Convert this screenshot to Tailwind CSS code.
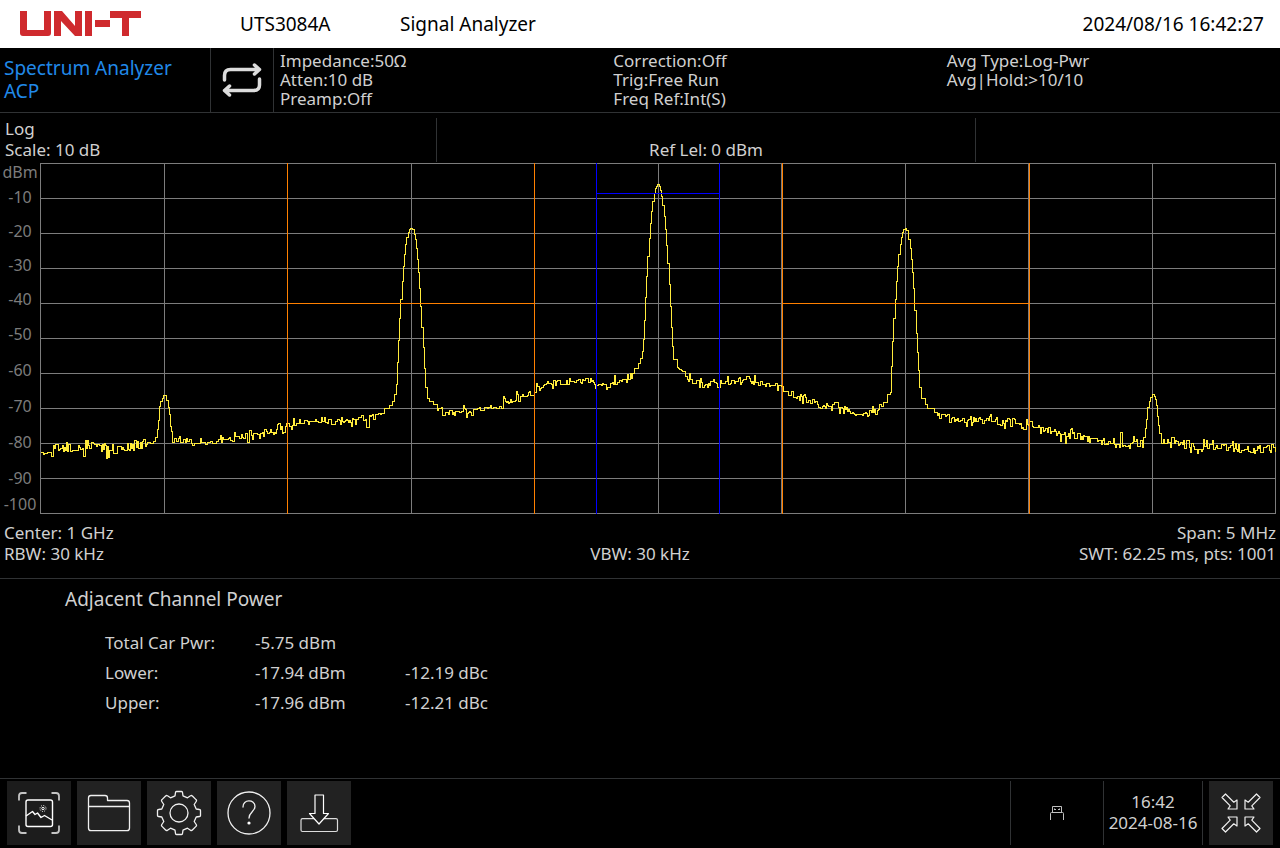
<!DOCTYPE html>
<html lang="en">
<head>
<meta charset="utf-8">
<meta name="viewport" content="width=device-width, initial-scale=1">
<title>UTS3084A Signal Analyzer</title>
<script src="https://cdn.jsdelivr.net/npm/@tailwindcss/browser@4"></script>
</head>
<body class="flex min-h-screen flex-col bg-black font-['Noto_Sans',sans-serif] text-[17px] leading-[21px] text-[#d0d0d0]">

<header class="flex h-12 items-center bg-white pr-4 pl-5 text-[19px] text-black">
  <div class="w-[220px]">
    <svg class="block" width="121" height="26" viewBox="0 0 121 26" fill="#cf2a2e" role="img" aria-label="UNI-T">
      <path d="M0 0h7v19h17V0h7v22q0 3-3 3H3q-3 0-3-3z"/>
      <path d="M34 0h8l13 15V0h7v25h-7L41 10v15h-7z"/>
      <path d="M65 0h7v25h-7z"/>
      <path d="M75 9h15v7H75z"/>
      <path d="M90 0h31v7h-12v18h-7V7H90z"/>
    </svg>
  </div>
  <span class="w-40">UTS3084A</span>
  <h1 class="flex-1">Signal Analyzer</h1>
  <time datetime="2024-08-16T16:42:27">2024/08/16 16:42:27</time>
</header>

<section class="flex h-[65px] border-b border-[#303234]" aria-label="Measurement settings">
  <button class="w-[211px] border-r border-[#303234] pl-1 text-left text-[19px] leading-[23px] text-[#2089e8]">Spectrum Analyzer<br>ACP</button>
  <button class="flex w-[63px] items-center justify-center border-r border-[#303234]" aria-label="Continuous sweep">
    <svg width="40" height="34" viewBox="0 0 40 34" fill="none" stroke="#dcdcdc" stroke-width="3.500" stroke-linecap="round" stroke-linejoin="round">
      <path d="M2.500 17V12.500Q2.500 6.500 8.500 6.500H37M32.500 2L37.500 6.500L32.500 11"/>
      <path d="M37.500 16V22Q37.500 27.500 31.500 27.500H3M7.500 23L2.500 27.500L7.500 32"/>
    </svg>
  </button>
  <div class="grid flex-1 grid-cols-3 pt-[3px] pl-1.5 leading-[19px] whitespace-nowrap">
    <div><p>Impedance:50Ω</p><p>Atten:10 dB</p><p>Preamp:Off</p></div>
    <div><p>Correction:Off</p><p>Trig:Free Run</p><p>Freq Ref:Int(S)</p></div>
    <div><p>Avg Type:Log-Pwr</p><p>Avg|Hold:&gt;10/10</p></div>
  </div>
</section>

<main class="flex flex-1 flex-col">
  <div class="flex pt-[5px]">
    <div class="h-11 w-[437px] border-r border-[#303234] pl-[5px]"><p>Log</p><p>Scale: 10 dB</p></div>
    <div class="flex h-11 w-[539px] items-end justify-center border-r border-[#303234] pb-0.5"><p>Ref Lel: 0 dBm</p></div>
  </div>

  <div class="mt-px flex pr-1">
    <div class="flex w-10 flex-col text-center text-[16px] text-[#7c7c7c]">
      <span class="h-[17px] leading-[18px]">dBm</span>
      <span class="h-[34px] leading-[34px]">-10</span>
      <span class="h-[34px] leading-[34px]">-20</span>
      <span class="h-[34px] leading-[34px]">-30</span>
      <span class="h-[34px] leading-[34px]">-40</span>
      <span class="h-9 leading-9">-50</span>
      <span class="h-9 leading-9">-60</span>
      <span class="h-9 leading-9">-70</span>
      <span class="h-9 leading-9">-80</span>
      <span class="h-9 leading-9">-90</span>
      <span class="h-[18px] leading-4">-100</span>
    </div>
    <svg class="block h-[351px] min-w-0 flex-1" viewBox="0 0 1236 351" preserveAspectRatio="none" fill="none" shape-rendering="crispEdges" role="img" aria-label="Spectrum trace">
      <g stroke="#7c7c7c">
        <path d="M0 .5H1236M0 35.500H1236M0 70.500H1236M0 105.500H1236M0 140.500H1236M0 175.500H1236M0 210.500H1236M0 245.500H1236M0 280.500H1236M0 315.500H1236M0 350.500H1236"/>
        <path d="M.5 0V351M124.500 0V351M247.500 0V351M371.500 0V351M494.500 0V351M618.500 0V351M741.500 0V351M865.500 0V351M988.500 0V351M1112.500 0V351M1235.500 0V351"/>
      </g>
      <path id="trace" stroke="#ffeb3b"/>
      <path stroke="#ff8000" d="M247.500 0V351M494.500 0V351M742.500 0V351M989.500 0V351M247 140.500H495M742 140.500H990"/>
      <path stroke="#0000ff" d="M556.500 0V351M679.500 0V351M556 30.500H680"/>
    </svg>
  </div>

  <div class="grid grid-cols-3 pt-2 pr-1 pb-3.5 pl-1">
    <p>Center: 1 GHz</p><p class="col-start-3 text-right">Span: 5 MHz</p>
    <p>RBW: 30 kHz</p><p class="text-center">VBW: 30 kHz</p><p class="text-right whitespace-nowrap">SWT: 62.25 ms, pts: 1001</p>
  </div>

  <section class="flex-1 border-t border-[#303234] pt-2 pl-[65px]">
    <h2 class="text-[19px] leading-6">Adjacent Channel Power</h2>
    <table class="mt-4 ml-10 text-left">
      <tbody>
        <tr class="h-[30px]"><th class="w-[150px] p-0 font-normal">Total Car Pwr:</th><td class="w-[150px] p-0">-5.75 dBm</td><td></td></tr>
        <tr class="h-[30px]"><th class="p-0 font-normal">Lower:</th><td class="p-0">-17.94 dBm</td><td class="p-0">-12.19 dBc</td></tr>
        <tr class="h-[30px]"><th class="p-0 font-normal">Upper:</th><td class="p-0">-17.96 dBm</td><td class="p-0">-12.21 dBc</td></tr>
      </tbody>
    </table>
  </section>
</main>

<footer class="flex h-[70px] border-t border-[#303234] pt-0.5 pr-[7px] pb-[3px] pl-[7px]">
  <nav class="flex flex-1 gap-1.5" aria-label="Tools">
    <button class="size-16 bg-[#1c1c1c]" aria-label="Screenshot">
      <svg class="block" width="64" height="64" viewBox="0 0 64 64" fill="none" stroke="#fff" stroke-width="1.400" stroke-linejoin="round">
        <path stroke="#c4c4c4" stroke-width="1.800" d="M12 19.500V15Q12 12 15 12H19.500M44.500 12H49Q52 12 52 15V19.500M12 44.500V49Q12 52 15 52H19.500M44.500 52H49Q52 52 52 49V44.500"/>
        <rect x="19" y="19" width="26.500" height="26.500" rx="2"/>
        <path d="M19 35L25.500 30.500L28 33.500L30.500 32L34 36.500L37.500 34.500L45 39"/>
        <circle cx="36" cy="27.500" r="1.200" stroke-width="1"/>
        <circle cx="36" cy="27.500" r="3" stroke-width="1" stroke-dasharray="1 1.350"/>
      </svg>
    </button>
    <button class="size-16 bg-[#222]" aria-label="Files">
      <svg class="block" width="64" height="64" viewBox="0 0 64 64" fill="none" stroke="#f0f0f0" stroke-width="1.300" stroke-linejoin="round">
        <path d="M11.500 47V17Q11.500 14.500 14 14.500H28Q30.500 14.500 30.500 17V19.500H50Q52.500 19.500 52.500 22V47Q52.500 49.700 50 49.700H14Q11.500 49.700 11.500 47ZM11.500 25.500H52.500"/>
      </svg>
    </button>
    <button class="size-16 bg-[#222]" aria-label="Settings">
      <svg class="block" width="64" height="64" viewBox="-32 -32 64 64" fill="none" stroke="#f0f0f0" stroke-width="1.300" stroke-linejoin="round">
        <circle r="9"/>
        <path d="M-2.500 -21.500H2.500Q3.500 -21.500 3.500 -20.500L4 -17.200L8.500 -15.200L11.500 -17.200Q12.500 -18 13.400 -17L17 -13.400Q18 -12.500 17.200 -11.500L15.200 -8.500L17.200 -4L20.500 -3.500Q21.500 -3.500 21.500 -2.500V2.500Q21.500 3.500 20.500 3.500L17.200 4L15.200 8.500L17.200 11.500Q18 12.500 17 13.400L13.400 17Q12.500 18 11.500 17.200L8.500 15.200L4 17.200L3.500 20.500Q3.500 21.500 2.500 21.500H-2.500Q-3.500 21.500 -3.500 20.500L-4 17.200L-8.500 15.200L-11.500 17.200Q-12.500 18 -13.400 17L-17 13.400Q-18 12.500 -17.200 11.500L-15.200 8.500L-17.200 4L-20.500 3.500Q-21.500 3.500 -21.500 2.500V-2.500Q-21.500 -3.500 -20.500 -3.500L-17.200 -4L-15.200 -8.500L-17.200 -11.500Q-18 -12.500 -17 -13.400L-13.400 -17Q-12.500 -18 -11.500 -17.200L-8.500 -15.200L-4 -17.200L-3.500 -20.500Q-3.500 -21.500 -2.500 -21.500Z"/>
      </svg>
    </button>
    <button class="size-16 bg-[#222]" aria-label="Help">
      <svg class="block" width="64" height="64" viewBox="0 0 64 64" fill="none" stroke="#f0f0f0" stroke-width="1.300" stroke-linecap="round">
        <circle cx="32" cy="32" r="21"/>
        <path d="M26 26C25.700 18 38 18 38 25.500C38 30.500 32 31 32 37"/>
        <circle cx="32" cy="42" r="1.600" fill="#fff" stroke="none"/>
      </svg>
    </button>
    <button class="size-16 bg-[#222]" aria-label="Save">
      <svg class="block" width="64" height="64" viewBox="0 0 64 64" fill="none" stroke="#dcdcdc" stroke-width="1.200" stroke-linejoin="round">
        <path d="M27 37.700H15.500Q14 37.700 14 39.200V49Q14 50.500 15.500 50.500H49Q50.500 50.500 50.500 49V39.200Q50.500 37.700 49 37.700H37"/>
        <path stroke="#fff" d="M28 14H36.500V32.500H41.500L32 43L22.500 32.500H28Z"/>
      </svg>
    </button>
  </nav>

  <div class="flex w-[94px] items-center justify-center border-x border-[#303234]">
    <svg width="14" height="14" viewBox="0 0 14 14" fill="none" stroke="#c0c0c0" role="img" aria-label="USB drive connected">
      <path d="M.5 14V7.500Q.5 6.500 1.500 6.500H12.500Q13.500 6.500 13.500 7.500V14M2.500 6.500V.5H11.500V6.500M4.500 2.500V4M5 3.500H6M8 3.500H9M9.500 2.500V4"/>
    </svg>
  </div>
  <div class="flex w-[99px] flex-col justify-center border-r border-[#303234] pb-0.5 text-center whitespace-nowrap">
    <span>16:42</span><span>2024-08-16</span>
  </div>
  <button class="ml-1.5 size-16 bg-[#222]" aria-label="Shrink window">
    <svg class="block" width="64" height="64" viewBox="-32 -32 64 64" fill="none" stroke="#f0f0f0" stroke-width="1.200" stroke-linejoin="round">
      <path d="M-15.500 -19L-7.200 -10.800L-4 -13V-4H-13L-10.800 -7.200L-19 -15.500Z"/>
      <path d="M15.500 -19L7.200 -10.800L4 -13V-4H13L10.800 -7.200L19 -15.500Z"/>
      <path d="M-15.500 19L-7.200 10.800L-4 13V4H-13L-10.800 7.200L-19 15.500Z"/>
      <path d="M15.500 19L7.200 10.800L4 13V4H13L10.800 7.200L19 15.500Z"/>
    </svg>
  </button>
</footer>

<script>
// Noise floor and carriers as [x, y, noise] knots; noise is the ripple height in pixels.
const floor = s => s.trim().split(/\s+/).map(p => p.split(',').map(Number));
const knots = [
  ...floor(`0,288,3 8,289,3 18,284,3 40,286,3 50,282,3 65,285,3 80,284,3 95,282,3 112,279,2`),
  ...floor(`113,278,0 115,274,0 117,266,0 118,257,0 119,243,0 120,238,0 122,235,0 123,232,0 125,232,0 126,237,0 128,244,0 129,251,0 130,263,0 131,268,0 132,279,0`),
  ...floor(`134,278,2 165,278,2 185,276,2 200,274,3 215,271,2 230,269,3 242,263,3 250,262,2 260,259,2 272,257,2 285,257,2 300,258,2 317,258,3 328,255,2 338,252,1 343,249,1`),
  ...floor(`345,245,0 349,242,0 352,238,0 354,231,0 356,221,0 357,199,0 358,177,0 359,155,0 360,136,0 362,118,0 363,103,0 364,91,0 365,81,0 366,74,0 368,69,0 369,66,0 370,65,0 372,66,0 374,71,0 375,76,0 376,85,0 377,96,0 378,109,0 379,125,0 380,143,0 381,164,0 383,184,0 384,205,0 385,224,0 387,235,0 389,238,0 393,241,0`),
  ...floor(`395,245,2 401,248,2 408,250,2 423,249,3 432,247,2 445,245,2 456,242,2 465,238,2 473,235,2 482,232,2 494,228,2 497,224,2 506,221,3 520,219,2 530,217,2 545,218,2 557,221,2 565,222,2 573,220,3 580,216,2 588,214,2`),
  ...floor(`592,210,0 594,205,0 598,200,0 600,195,0 602,188,0 603,176,0 604,157,0 605,134,0 606,113,0 607,93,0 609,75,0 610,60,0 611,48,0 612,38,0 614,30,0 615,25,0 616,23,0 617,21,0 618,21,0 619,23,0 620,27,0 621,33,0 622,42,0 624,53,0 625,66,0 626,82,0 627,100,0 629,121,0 630,143,0 631,164,0 632,183,0 633,196,0 637,204,0 642,208,0`),
  ...floor(`645,212,1 649,217,2 660,220,2 675,222,2 682,220,2 700,217,2 710,218,3 720,220,2 730,223,2 740,225,2 750,230,2 760,235,2 772,238,2 784,242,2 796,245,2 808,248,1 818,252,1 824,251,2 832,248,2 840,245,1`),
  ...floor(`843,239,0 847,231,0 850,229,0 851,203,0 852,178,0 853,155,0 855,136,0 856,118,0 857,103,0 858,91,0 860,81,0 861,74,0 862,69,0 863,66,0 865,65,0 866,67,0 868,76,0 870,85,0 871,96,0 872,109,0 873,125,0 874,147,0 876,170,0 877,189,0 878,207,0 879,224,0 881,235,0 885,241,0 887,245,0`),
  ...floor(`890,248,2 900,252,2 910,256,2 925,258,2 940,257,3 952,256,3 962,258,3 972,258,2 985,262,2 995,263,3 1010,268,2 1020,272,3 1035,272,2 1045,275,2 1060,278,2 1075,279,3 1090,279,2 1103,280,2`),
  ...floor(`1104,274,0 1105,265,0 1106,256,0 1107,244,0 1109,238,0 1110,234,0 1112,231,0 1114,233,0 1115,236,0 1116,242,0 1117,253,0 1118,262,0 1119,270,0 1121,280,0`),
  ...floor(`1123,280,3 1135,279,2 1150,282,3 1165,284,3 1175,283,3 1195,284,3 1215,285,3 1235,286,3`)
];
let seed = 2024, k = 0, d = 'M0.5 289.5';
const random = () => (seed = (seed * 1664525 + 1013904223) % 4294967296) / 4294967296;
for (let x = 1; x < 1236; x++) {
  while (k < knots.length - 2 && knots[k + 1][0] <= x) k++;
  const [x0, y0, n] = knots[k], [x1, y1] = knots[k + 1];
  if (n && random() < 0.35) continue;
  if (!n && x1 - x0 < 5 && x !== x0) continue;
  const ripple = (random() + random() + random() - 1.5) * 2.5 * n;
  const y = Math.round(y0 + (y1 - y0) * (x - x0) / (x1 - x0) + ripple) + 0.5;
  d += `H${x + 0.5}V${y}`;
}
document.getElementById('trace').setAttribute('d', d + 'H1235.5');
</script>
</body>
</html>
